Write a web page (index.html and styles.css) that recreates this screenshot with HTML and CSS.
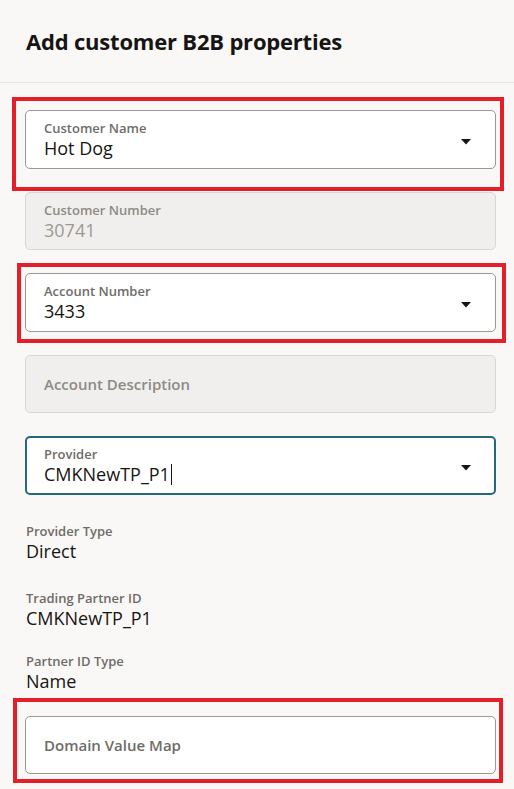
FILE: index.html
```html
<!DOCTYPE html>
<html>
<head>
<meta charset="utf-8">
<link rel="stylesheet" href="styles.css">
</head>
<body>
<div class="page">
  <header class="header">
    <h1 class="title">Add customer B2B properties</h1>
  </header>
  <main class="form">
    <div class="field">
      <div class="field-text">
        <div class="label">Customer Name</div>
        <div class="value">Hot Dog</div>
      </div>
      <svg class="arrow" width="10" height="6" viewBox="0 0 10 6"><path d="M0 0H10L5 5.5Z" fill="#161513"/></svg>
    </div>
    <div class="field disabled">
      <div class="field-text">
        <div class="label">Customer Number</div>
        <div class="value">30741</div>
      </div>
    </div>
    <div class="field">
      <div class="field-text">
        <div class="label">Account Number</div>
        <div class="value">3433</div>
      </div>
      <svg class="arrow" width="10" height="6" viewBox="0 0 10 6"><path d="M0 0H10L5 5.5Z" fill="#161513"/></svg>
    </div>
    <div class="field disabled placeholder-field">
      <div class="placeholder">Account Description</div>
    </div>
    <div class="field focused">
      <div class="field-text">
        <div class="label">Provider</div>
        <div class="value">CMKNewTP_P1<span class="caret"></span></div>
      </div>
      <svg class="arrow" width="10" height="6" viewBox="0 0 10 6"><path d="M0 0H10L5 5.5Z" fill="#161513"/></svg>
    </div>
    <div class="readonly first">
      <div class="label">Provider Type</div>
      <div class="value">Direct</div>
    </div>
    <div class="readonly second">
      <div class="label">Trading Partner ID</div>
      <div class="value">CMKNewTP_P1</div>
    </div>
    <div class="readonly third">
      <div class="label">Partner ID Type</div>
      <div class="value">Name</div>
    </div>
    <div class="field placeholder-field domain">
      <div class="placeholder">Domain Value Map</div>
    </div>
  </main>
  <div class="mark mark-1"></div>
  <div class="mark mark-2"></div>
  <div class="mark mark-3"></div>
</div>
</body>
</html>
```
FILE: styles.css
```css
html, body {
  margin: 0;
  padding: 0;
  background: #f9f8f6;
  font-family: "Open Sans", "Noto Sans", sans-serif;
  color: #161513;
  overflow: hidden;
}
.page {
  position: relative;
  width: 514px;
  height: 789px;
}
.header {
  box-sizing: border-box;
  height: 83px;
  padding: 28px 26px 0;
  border-bottom: 1px solid #e8e5e1;
}
.title {
  margin: 0;
  font-size: 22px;
  line-height: 26px;
  font-weight: 700;
  letter-spacing: -0.2px;
  color: #161513;
}
.form {
  display: flex;
  flex-direction: column;
  padding: 27px 18px 0 25px;
}
.field {
  box-sizing: border-box;
  height: 58.5px;
  margin-bottom: 23px;
  border: 1px solid #9c9893;
  border-radius: 5px;
  background: #ffffff;
  display: flex;
  align-items: flex-start;
  justify-content: space-between;
  padding: 10px 24px 0 18px;
}
.field-text {
  display: flex;
  flex-direction: column;
}
.label {
  font-size: 13px;
  line-height: 15px;
  font-weight: 600;
  color: #6f6c68;
}
.value {
  font-size: 18px;
  line-height: 25px;
  color: #161513;
  display: flex;
  align-items: center;
}
.arrow {
  margin-top: 18px;
  flex-shrink: 0;
}
.disabled {
  background: #f1efed;
  border-color: #dad7d3;
}
.disabled .label {
  color: #8e8a85;
}
.disabled .value {
  color: #9d9994;
}
.focused {
  border: 2px solid #25687a;
  padding: 9px 23px 0 17px;
}
.caret {
  display: inline-block;
  width: 1px;
  height: 21px;
  background: #161513;
  margin-left: 1px;
}
.placeholder-field {
  align-items: center;
  padding-top: 0;
}
.placeholder {
  font-size: 15px;
  font-weight: 600;
  color: #6f6c68;
}
.disabled .placeholder {
  color: #8e8a85;
}
.readonly {
  display: flex;
  flex-direction: column;
  padding-left: 1px;
}
.readonly.first {
  margin-top: 6px;
  margin-bottom: 27px;
}
.readonly.second {
  margin-bottom: 23px;
}
.readonly.third {
  margin-bottom: 22px;
}
.mark {
  position: absolute;
  box-sizing: border-box;
  border: 4px solid #e31f2a;
  pointer-events: none;
}
.mark-1 { left: 12px; top: 97px; width: 492px; height: 94px; }
.mark-2 { left: 17px; top: 263px; width: 489px; height: 80px; }
.mark-3 { left: 13px; top: 698px; width: 490px; height: 85px; }
```
